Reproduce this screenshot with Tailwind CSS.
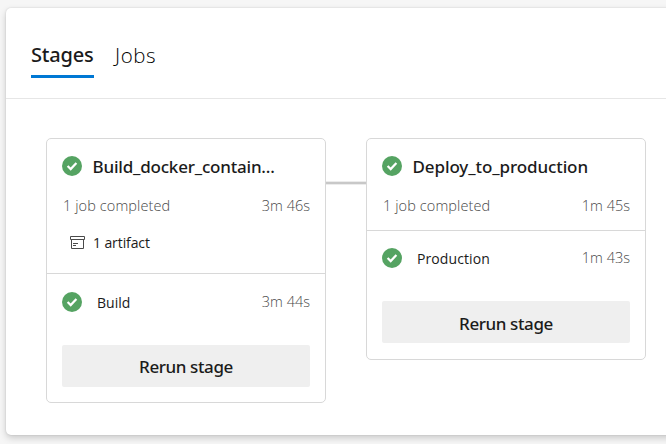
<!DOCTYPE html>
<html lang="en">
<head>
<meta charset="utf-8">
<title>Pipeline stages</title>
<script src="https://cdn.jsdelivr.net/npm/@tailwindcss/browser@4"></script>
</head>
<body class="bg-white font-['Open_Sans','Noto_Sans',sans-serif] text-[#1b1b1b] overflow-hidden">
<svg class="hidden">
  <symbol id="ok" viewBox="0 0 20 20"><circle cx="10" cy="10" r="10" fill="#55a362"/><path d="M5.6 10 8.7 13.1 14.4 7" fill="none" stroke="#fff" stroke-width="2.2"/></symbol>
</svg>
<div class="w-[666px] h-[444px] bg-[#f6f6f6] pl-1.5 pt-2 overflow-hidden">
  <main class="w-[700px] h-[427px] bg-white rounded-[5px] shadow-[0_3px_7px_rgba(0,0,0,0.18),0_0_2px_rgba(0,0,0,0.14)]">
    <nav class="h-[91px] border-b border-[#e6e6e6] pl-[25px] pt-[31px] flex gap-[21px] text-[20px] leading-[32px] whitespace-nowrap">
      <div class="w-[63px] h-[39px] border-b-3 border-[#0078d4] font-['Noto_Sans'] font-medium tracking-[-0.2px]">Stages</div>
      <div class="text-[20.5px] font-light text-black tracking-[0.6px]">Jobs</div>
    </nav>
    <div class="flex items-start pl-10 pt-[39px] whitespace-nowrap">
      <section class="w-[280px] h-[265px] border border-[#d8d8d8] rounded-[5px]">
        <div class="h-[135px] border-b border-[#d8d8d8] px-[15px] pt-[13px]">
          <div class="flex items-center h-7"><svg class="size-5"><use href="#ok"/></svg><h2 class="ml-[10.5px] pt-px font-['Noto_Sans'] text-[17px] font-medium tracking-[-0.2px]">Build_docker_contain...</h2></div>
          <div class="flex justify-between mt-[16px] h-5 leading-5 text-[14.5px] font-light text-[#484848]"><span class="pl-px tracking-[0.1px]">1 job completed</span><span>3m 46s</span></div>
          <div class="flex items-center mt-[16px] ml-2 h-5 text-[14px] tracking-[-0.1px]">
            <svg class="w-[15px] h-[13px]" viewBox="0 0 15 13" fill="none" stroke="#4a4a4a"><path d="M.5.5h14v3H.5zM1.5 3.5v9h12v-9M3 7.5h5M3 9.5h3"/></svg>
            <span class="ml-2">1 artifact</span>
          </div>
        </div>
        <div class="px-[15px] pt-[18px]">
          <div class="flex items-center h-5 text-[14px]"><svg class="size-5"><use href="#ok"/></svg><span class="ml-[15px]">Build</span><span class="ml-auto text-[14.5px] font-light text-[#484848]">3m 44s</span></div>
          <button class="block w-full h-[42px] mt-[33px] pt-px bg-[#efefef] rounded-[2px] font-['Noto_Sans'] text-[17px] font-medium tracking-[-0.4px]">Rerun stage</button>
        </div>
      </section>
      <div class="w-10 h-1 mt-[43px] bg-[#c8c8c8] border-y border-[#ececec]"></div>
      <section class="w-[280px] h-[222px] border border-[#d8d8d8] rounded-[5px]">
        <div class="h-[92px] border-b border-[#d8d8d8] px-[15px] pt-[13px]">
          <div class="flex items-center h-7"><svg class="size-5"><use href="#ok"/></svg><h2 class="ml-[10.5px] pt-px font-['Noto_Sans'] text-[17px] font-medium tracking-[-0.1px]">Deploy_to_production</h2></div>
          <div class="flex justify-between mt-[16px] h-5 leading-5 text-[14.5px] font-light text-[#484848]"><span class="pl-px tracking-[0.1px]">1 job completed</span><span>1m 45s</span></div>
        </div>
        <div class="px-[15px] pt-[17px]">
          <div class="flex items-center h-5 text-[14px]"><svg class="size-5"><use href="#ok"/></svg><span class="ml-[15px] tracking-[0.1px]">Production</span><span class="ml-auto text-[14.5px] font-light text-[#484848]">1m 43s</span></div>
          <button class="block w-full h-[42px] mt-[33px] pt-[3px] bg-[#efefef] rounded-[2px] font-['Noto_Sans'] text-[17px] font-medium tracking-[-0.4px]">Rerun stage</button>
        </div>
      </section>
    </div>
  </main>
</div>
</body>
</html>
